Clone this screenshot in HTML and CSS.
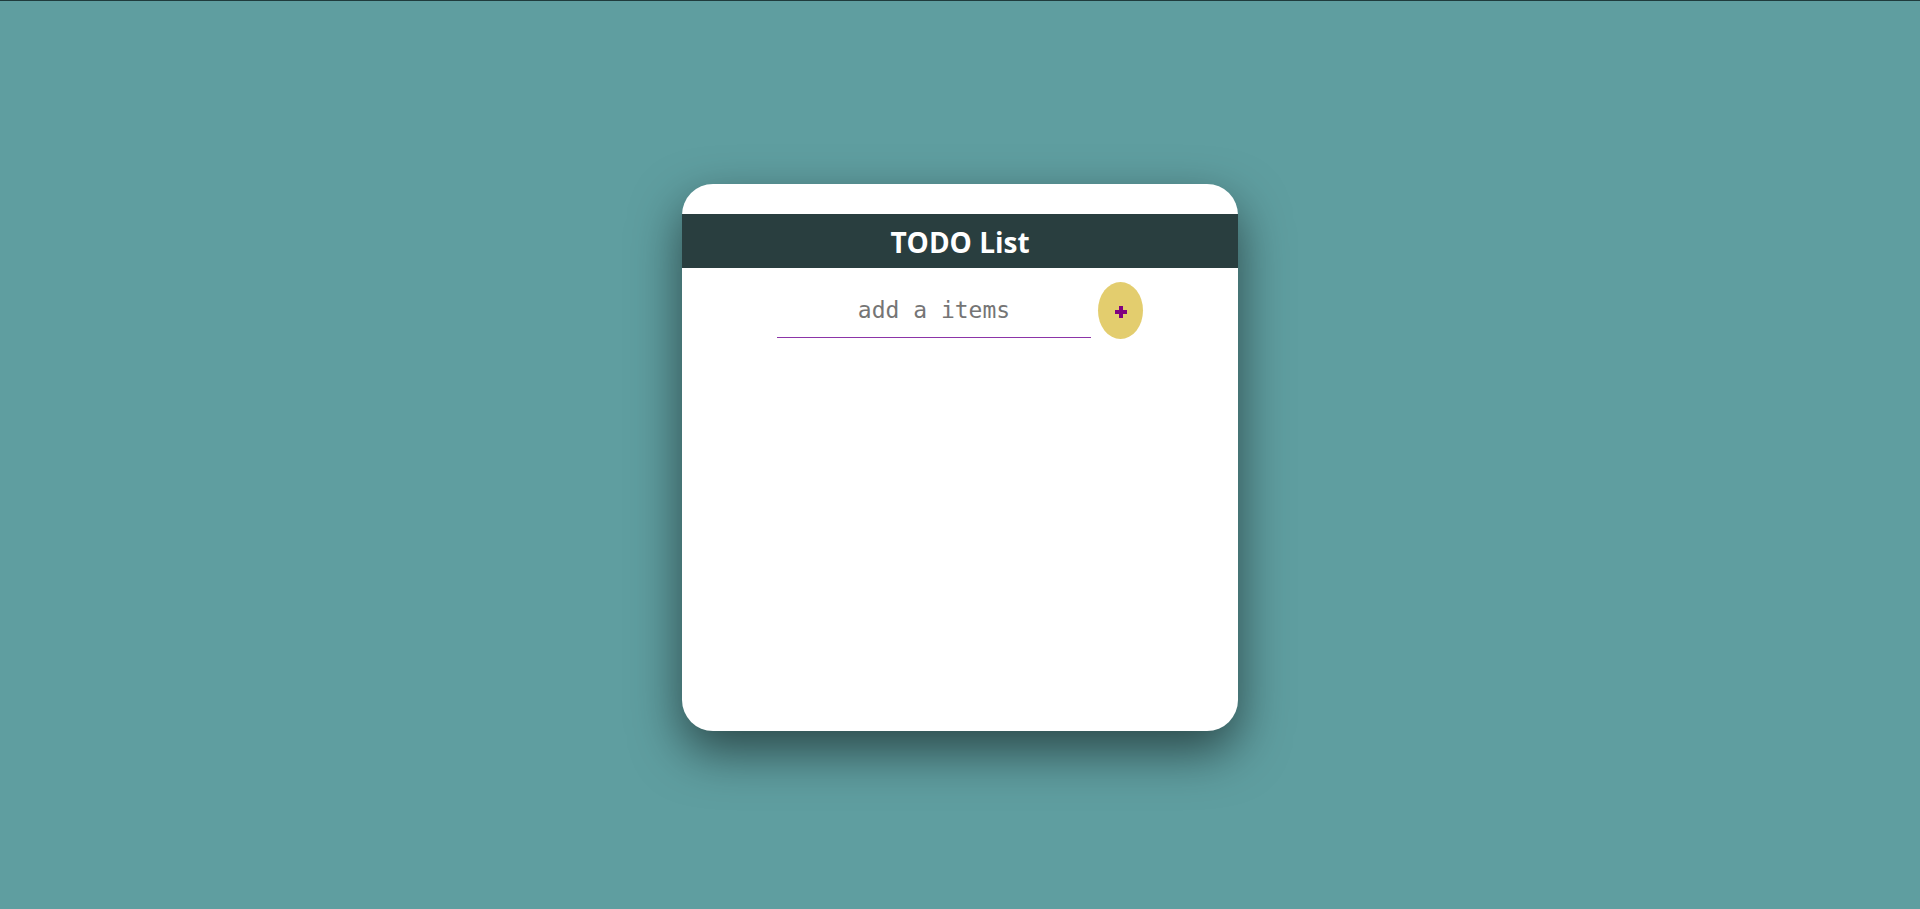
FILE: index.html
```html
<!DOCTYPE html>
<html lang="en">
<head>
<meta charset="utf-8">
<title>TODO List</title>
<link rel="stylesheet" href="styles.css">
</head>
<body>
<div class="page">
  <div class="card">
    <h1 class="title">TODO List</h1>
    <div class="add-row">
      <input class="add-input" type="text" placeholder="add a items">
      <button class="add-btn" type="button" aria-label="add">
        <svg width="14" height="14" viewBox="0 0 14 14"><path d="M7 1v12M1 7h12" stroke="#800080" stroke-width="4"/></svg>
      </button>
    </div>
  </div>
</div>
</body>
</html>
```

FILE: styles.css
```css
html, body {
  margin: 0;
  padding: 0;
}
body {
  background: #5f9ea0;
  border-top: 1px solid #1f3b3c;
  font-family: "Open Sans", "Liberation Sans", sans-serif;
}
.page {
  height: 908px;
  box-sizing: border-box;
  padding-top: 5px;
  display: flex;
  align-items: center;
  justify-content: center;
}
.card {
  width: 556px;
  height: 547px;
  box-sizing: border-box;
  padding-top: 30px;
  background: #ffffff;
  border-radius: 31px;
  box-shadow: 0 20px 50px rgba(0, 0, 0, 0.55);
}
.title {
  margin: 0;
  height: 54px;
  background: #293e3f;
  color: #ffffff;
  font-size: 28px;
  font-weight: 700;
  line-height: 56px;
  text-align: center;
  letter-spacing: 0;
}
.add-row {
  margin-top: 14px;
  display: flex;
  justify-content: center;
  align-items: flex-start;
  gap: 7px;
}
.add-input {
  width: 314px;
  height: 56px;
  box-sizing: border-box;
  border: none;
  border-bottom: 1px solid #8c35a8;
  outline: none;
  padding: 0;
  text-align: center;
  font-family: "DejaVu Sans Mono", "Liberation Mono", monospace;
  font-size: 23px;
  color: #333;
  background: transparent;
}
.add-input::placeholder {
  color: #757575;
}
.add-btn {
  width: 45px;
  height: 57px;
  border: none;
  border-radius: 50%;
  background: #e3cd6e;
  padding: 0;
  display: flex;
  align-items: center;
  justify-content: center;
  cursor: pointer;
}
.add-btn svg {
  display: block;
  margin-top: 2px;
}
```
